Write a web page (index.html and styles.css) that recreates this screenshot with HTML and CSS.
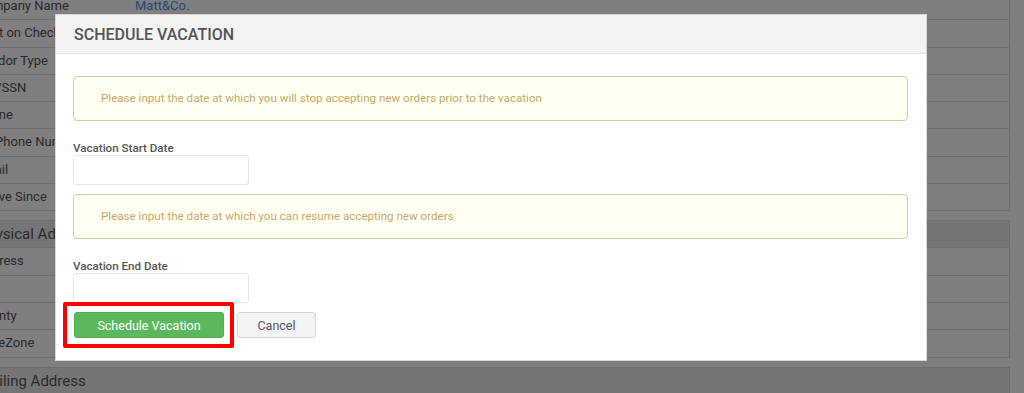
FILE: index.html
```html
<!DOCTYPE html>
<html lang="en">
<head>
    <meta charset="UTF-8">
    <meta name="viewport" content="width=device-width, initial-scale=1.0">
    <title>Schedule Vacation</title>
    <link rel="stylesheet" href="styles.css">
</head>
<body>
    <div class="page">
        <div class="panel panel-info">
            <div class="row"><div class="label">Company Name</div><div class="value link">Matt&amp;Co.</div></div>
            <div class="row"><div class="label">Print on Check</div><div class="value"></div></div>
            <div class="row"><div class="label">Vendor Type</div><div class="value"></div></div>
            <div class="row"><div class="label">EIN/SSN</div><div class="value"></div></div>
            <div class="row"><div class="label">Phone</div><div class="value"></div></div>
            <div class="row"><div class="label">Alt Phone Number</div><div class="value"></div></div>
            <div class="row"><div class="label">Email</div><div class="value"></div></div>
            <div class="row"><div class="label">Active Since</div><div class="value"></div></div>
        </div>

        <div class="panel">
            <div class="panel-heading">Physical Address</div>
            <div class="row"><div class="label">Address</div><div class="value"></div></div>
            <div class="row"><div class="label">City</div><div class="value"></div></div>
            <div class="row"><div class="label">County</div><div class="value"></div></div>
            <div class="row"><div class="label">TimeZone</div><div class="value"></div></div>
        </div>

        <div class="panel">
            <div class="panel-heading">Mailing Address</div>
        </div>
    </div>

    <div class="backdrop"></div>

    <div class="modal">
        <div class="modal-header">SCHEDULE VACATION</div>
        <div class="modal-body">
            <div class="alert">Please input the date at which you will stop accepting new orders prior to the vacation</div>
            <label for="startDate">Vacation Start Date</label>
            <input type="text" id="startDate">

            <div class="alert">Please input the date at which you can resume accepting new orders</div>
            <label for="endDate">Vacation End Date</label>
            <input type="text" id="endDate">

            <div class="actions">
                <span class="highlight"><button class="btn btn-success">Schedule Vacation</button></span>
                <button class="btn btn-default">Cancel</button>
            </div>
        </div>
    </div>
</body>
</html>
```

FILE: styles.css
```css
body {
    margin: 0;
    font-family: Roboto, "Liberation Sans", sans-serif;
    background-color: white;
    overflow: hidden;
    height: 393px;
}
.page {
    margin: -8px 14px 0 -33px;
}
.panel {
    border: 1px solid #dddddd;
    margin-bottom: 9px;
}
.row {
    display: flex;
    height: 26.3px;
    border-top: 1px solid #dddddd;
    font-size: 13px;
    color: #555;
}
.panel-info .row:first-child {
    border-top: none;
}
.label {
    width: 159px;
    padding-left: 8px;
    line-height: 26px;
}
.value {
    flex: 1;
    line-height: 26px;
}
.link {
    color: #4a96e8;
}
.panel-heading {
    background-color: #eaeaea;
    height: 26px;
    line-height: 26px;
    padding-left: 10px;
    font-size: 15px;
    color: #555;
}
.backdrop {
    position: fixed;
    top: 0;
    left: 0;
    right: 0;
    bottom: 0;
    background-color: rgba(0,0,0,0.5);
}
.modal {
    position: fixed;
    top: 14px;
    left: 55px;
    width: 870px;
    background-color: white;
    border: 1px solid #d8d8d8;
}
.modal-header {
    background-color: #f3f3f3;
    border-bottom: 1px solid #e5e5e5;
    height: 38px;
    line-height: 40px;
    padding-left: 18px;
    font-size: 16px;
    font-weight: 500;
    color: #555;
}
.modal-body {
    padding: 22px 18px 22px 17px;
}
.alert {
    height: 43px;
    line-height: 43px;
    padding-left: 27px;
    background-color: #fffff2;
    border: 1px solid #dcc8a0;
    border-radius: 4px;
    font-size: 11.6px;
    color: #c9a76c;
    margin-bottom: 20px;
}
label {
    display: block;
    height: 14px;
    line-height: 14px;
    font-size: 11.6px;
    font-weight: 500;
    color: #555;
}
input[type="text"] {
    display: block;
    box-sizing: border-box;
    width: 176px;
    height: 30px;
    margin: 0 0 9px 0;
    border: 1px solid #e6e6e6;
    border-radius: 3px;
}
.actions {
    display: flex;
    gap: 13px;
    padding-left: 1px;
}
.highlight {
    position: relative;
    display: block;
}
.highlight::after {
    content: "";
    position: absolute;
    top: -10px;
    left: -11px;
    right: -10px;
    bottom: -10px;
    border: 4px solid #ff0000;
    border-radius: 2px;
}
.btn {
    display: block;
    height: 26px;
    border-radius: 3px;
    font-family: Roboto, "Liberation Sans", sans-serif;
    font-size: 12.5px;
    cursor: pointer;
}
.btn-success {
    width: 150px;
    background-color: #5cb85c;
    border: 1px solid #52ad52;
    color: white;
}
.btn-default {
    width: 79px;
    background-color: #f4f4f4;
    border: 1px solid #d5d5d5;
    color: #555;
}
```
